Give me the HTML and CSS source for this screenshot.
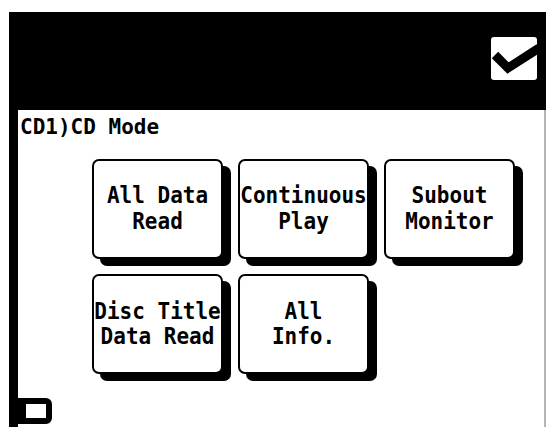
FILE: index.html
```html
<!DOCTYPE html>
<html lang="en">
<head>
<meta charset="utf-8">
<title>CD Mode</title>
<link rel="stylesheet" href="styles.css">
</head>
<body>
<div class="screen">
  <header class="topbar">
    <span class="ok-box">
      <svg viewBox="0 0 46 43" width="46" height="43" aria-hidden="true">
        <polyline points="4,18 17,31 48,11" fill="none" stroke="#000" stroke-width="9" stroke-linejoin="miter"/>
      </svg>
    </span>
  </header>
  <main class="panel">
    <div class="title">CD1)CD Mode</div>
    <div class="grid">
      <button class="key"><span class="label">All Data<br>Read</span></button>
      <button class="key"><span class="label">Continuous<br>Play</span></button>
      <button class="key"><span class="label">Subout<br>Monitor</span></button>
      <button class="key"><span class="label">Disc Title<br>Data Read</span></button>
      <button class="key"><span class="label">All<br>Info.</span></button>
    </div>
    <div class="status-icon"></div>
  </main>
</div>
</body>
</html>
```
FILE: styles.css
```css
html, body {
  margin: 0;
  padding: 0;
  background: #fff;
  overflow: hidden;
}

.screen {
  margin: 12px 0 0 9px;
  border-left: 9px solid #000;
  height: 415px;
  display: flex;
  flex-direction: column;
  font-family: "DejaVu Sans Mono", "Liberation Mono", monospace;
  font-weight: bold;
  color: #000;
}

.topbar {
  box-sizing: border-box;
  height: 98px;
  background: #000;
  display: flex;
  justify-content: flex-end;
  align-items: flex-start;
  padding: 25px 9px 0 0;
}

.ok-box {
  display: block;
  width: 46px;
  height: 43px;
  background: #fff;
  border-radius: 3px;
  overflow: hidden;
}

.ok-box svg {
  display: block;
}

.panel {
  flex: 1;
  display: flex;
  flex-direction: column;
  align-items: flex-start;
  border-right: 2px solid #b4b4b4;
}

.title {
  font-size: 21px;
  line-height: 24px;
  padding: 5px 0 0 2px;
  white-space: nowrap;
}

.grid {
  display: grid;
  grid-template-columns: repeat(3, 131px);
  grid-auto-rows: 100px;
  column-gap: 15px;
  row-gap: 15px;
  margin: 20px 0 0 74px;
}

.key {
  box-sizing: border-box;
  margin: 0;
  padding: 0;
  border: 2px solid #000;
  border-radius: 7px;
  background: #fff;
  box-shadow: 8px 7px 0 #000;
  display: flex;
  align-items: center;
  justify-content: center;
  font: inherit;
  color: #000;
}

.label {
  display: block;
  font-size: 21px;
  line-height: 23px;
  text-align: center;
  white-space: nowrap;
  transform: scaleY(1.1);
}

.status-icon {
  box-sizing: border-box;
  width: 34px;
  height: 26px;
  margin-top: 24px;
  border: 6px solid #000;
  border-left-width: 8px;
  border-radius: 0 6px 6px 0;
  background: #fff;
}
```
